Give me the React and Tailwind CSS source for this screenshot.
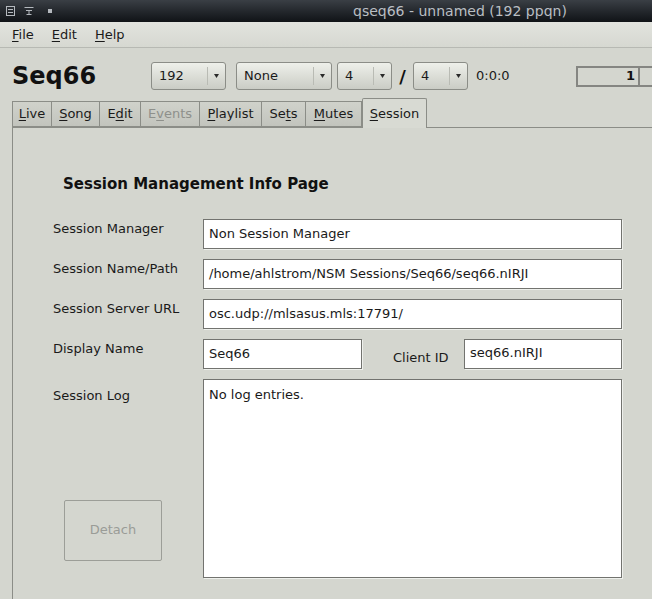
import React from 'react';

// Qt "qseq66" main window, Session tab.

const FONT = { fontFamily: '"DejaVu Sans", "Liberation Sans", sans-serif' };

function Mn({ children }) {
  return <span className="underline underline-offset-[2px] decoration-1">{children}</span>;
}

function TitleIcons() {
  return (
    <div className="flex items-center gap-[8px] pl-[6px] text-[#b4b9be]">
      <svg width="10" height="10" viewBox="0 0 10 10" fill="none" stroke="currentColor" strokeWidth="1">
        <rect x="0.5" y="0.5" width="8" height="9" />
        <line x1="2" y1="3.5" x2="7" y2="3.5" />
        <line x1="2" y1="6.5" x2="7" y2="6.5" />
      </svg>
      <svg width="10" height="10" viewBox="0 0 10 10" fill="none" stroke="currentColor" strokeWidth="1">
        <line x1="0.5" y1="1.5" x2="9.5" y2="1.5" />
        <line x1="2" y1="4.5" x2="8" y2="4.5" />
        <line x1="5" y1="4.5" x2="5" y2="8" />
        <line x1="2.5" y1="8.5" x2="7.5" y2="8.5" />
      </svg>
      <span className="ml-[6px] inline-block h-[4px] w-[4px] bg-[#b4b9be]" />
    </div>
  );
}

function Combo({ value, width }) {
  return (
    <div
      className="flex h-[28px] shrink-0 items-stretch rounded-[3px] border border-[#8b8d87] bg-gradient-to-b from-[#eef0ea] to-[#caccc5] text-[13px] text-[#1a1a1a]"
      style={{ width }}
    >
      <div className="flex flex-1 items-center pl-[7px]">{value}</div>
      <div className="my-[4px] w-px bg-[#b9bbb4]" />
      <div className="flex w-[17px] items-center justify-center">
        <svg width="5" height="4" viewBox="0 0 5 4">
          <path d="M0 0 L5 0 L2.5 4 Z" fill="#2a2a2a" />
        </svg>
      </div>
    </div>
  );
}

function Tab({ children, selected, disabled, width }) {
  if (selected) {
    return (
      <div
        className="-mb-px flex h-[30px] shrink-0 items-center justify-center rounded-t-[2px] border border-b-0 border-[#8b8d87] bg-[#d8dad3] text-[13px] text-[#1a1a1a]"
        style={{ width }}
      >
        {children}
      </div>
    );
  }
  return (
    <div
      className={`flex h-[26px] shrink-0 items-center justify-center border border-l-0 border-[#8b8d87] bg-gradient-to-b from-[#d0d2cb] to-[#c2c4bd] text-[13px] first:border-l ${
        disabled ? 'text-[#8e908b]' : 'text-[#1a1a1a]'
      }`}
      style={{ width }}
    >
      {children}
    </div>
  );
}

function Field({ children, className = '' }) {
  return (
    <div
      className={`flex h-[30px] shrink-0 items-center border border-[#72736f] bg-white pl-[5px] text-[13px] text-[#1a1a1a] shadow-[1px_1px_0_#eef0ec] ${className}`}
    >
      {children}
    </div>
  );
}

export default function App() {
  return (
    <div className="h-[599px] w-[652px] overflow-hidden bg-[#d4d6cf]" style={FONT}>
      {/* window title bar */}
      <div className="flex h-[22px] items-center overflow-hidden bg-gradient-to-b from-[#3a3f45] to-[#101317]">
        <TitleIcons />
        <div className="shrink-0 whitespace-nowrap pl-[301px] text-[14px] text-[#b9bec3]">
          qseq66 - unnamed (192 ppqn)
        </div>
      </div>

      {/* menu bar */}
      <div className="flex h-[26px] items-center gap-[18px] border-b border-[#b7b9b3] bg-gradient-to-b from-[#e2e3de] to-[#d6d8d1] px-[12px] text-[13px] text-[#1a1a1a]">
        <span><Mn>F</Mn>ile</span>
        <span><Mn>E</Mn>dit</span>
        <span><Mn>H</Mn>elp</span>
      </div>

      {/* toolbar */}
      <div className="flex h-[50px] items-center overflow-hidden pl-[12px] pt-[6px]">
        <span className="w-[139px] shrink-0 text-[24px] font-bold leading-none text-[#111]">Seq66</span>
        <Combo value="192" width={75} />
        <div className="w-[10px] shrink-0" />
        <Combo value="None" width={96} />
        <div className="w-[5px] shrink-0" />
        <Combo value="4" width={55} />
        <span className="w-[21px] shrink-0 text-center text-[18px] font-bold text-[#111]">/</span>
        <Combo value="4" width={55} />
        <span className="ml-[8px] w-[100px] shrink-0 text-[13px] text-[#1a1a1a]">0:0:0</span>
        <div className="flex h-[21px] w-[64px] shrink-0 items-center justify-end border-2 border-[#858682] pr-[3px] text-[13px] font-bold text-[#111]">
          1
        </div>
        <div className="h-[21px] w-[40px] shrink-0 border-2 border-l-0 border-[#858682]" />
      </div>

      {/* tabs */}
      <div className="flex items-end pl-[12px]">
        <Tab width={40}><Mn>L</Mn>ive</Tab>
        <Tab width={48}><Mn>S</Mn>ong</Tab>
        <Tab width={41}>E<Mn>d</Mn>it</Tab>
        <Tab width={59} disabled>E<Mn>v</Mn>ents</Tab>
        <Tab width={62}><Mn>P</Mn>laylist</Tab>
        <Tab width={44}>Se<Mn>t</Mn>s</Tab>
        <Tab width={56}><Mn>M</Mn>utes</Tab>
        <Tab width={65} selected><Mn>S</Mn>ession</Tab>
      </div>

      {/* tab pane */}
      <div className="ml-[12px] h-[480px] border-l border-t border-[#8b8d87] bg-[#d4d6cf] pl-[40px] pt-[47px] text-[13px] text-[#1a1a1a]">
        <h2 className="pl-[10px] text-[15px] font-bold leading-[18px] text-[#111]">
          Session Management Info Page
        </h2>

        <div className="mt-[26px] flex flex-col gap-[10px]">
          <div className="flex">
            <div className="w-[150px] shrink-0">Session Manager</div>
            <Field className="w-[419px]">Non Session Manager</Field>
          </div>
          <div className="flex">
            <div className="w-[150px] shrink-0">Session Name/Path</div>
            <Field className="w-[419px]">/home/ahlstrom/NSM Sessions/Seq66/seq66.nIRJI</Field>
          </div>
          <div className="flex">
            <div className="w-[150px] shrink-0">Session Server URL</div>
            <Field className="w-[419px]">osc.udp://mlsasus.mls:17791/</Field>
          </div>
          <div className="flex">
            <div className="w-[150px] shrink-0">Display Name</div>
            <Field className="w-[159px]">Seq66</Field>
            <div className="flex w-[102px] shrink-0 items-end pb-[2px] pl-[31px]">Client ID</div>
            <Field className="w-[158px] items-start pt-[3px]">seq66.nIRJI</Field>
          </div>
          <div className="flex">
            <div className="flex w-[150px] shrink-0 flex-col pt-[7px]">
              <span>Session Log</span>
              <button
                disabled
                className="ml-[11px] mt-[94px] h-[61px] w-[98px] rounded-[2px] border border-[#9c9e98] bg-[#d4d6cf] text-[13px] text-[#9a9c97]"
              >
                Detach
              </button>
            </div>
            <div className="h-[199px] w-[419px] shrink-0 border border-[#72736f] bg-white pl-[5px] pt-[5px] shadow-[1px_1px_0_#eef0ec]">
              No log entries.
            </div>
          </div>
        </div>
      </div>
    </div>
  );
}
